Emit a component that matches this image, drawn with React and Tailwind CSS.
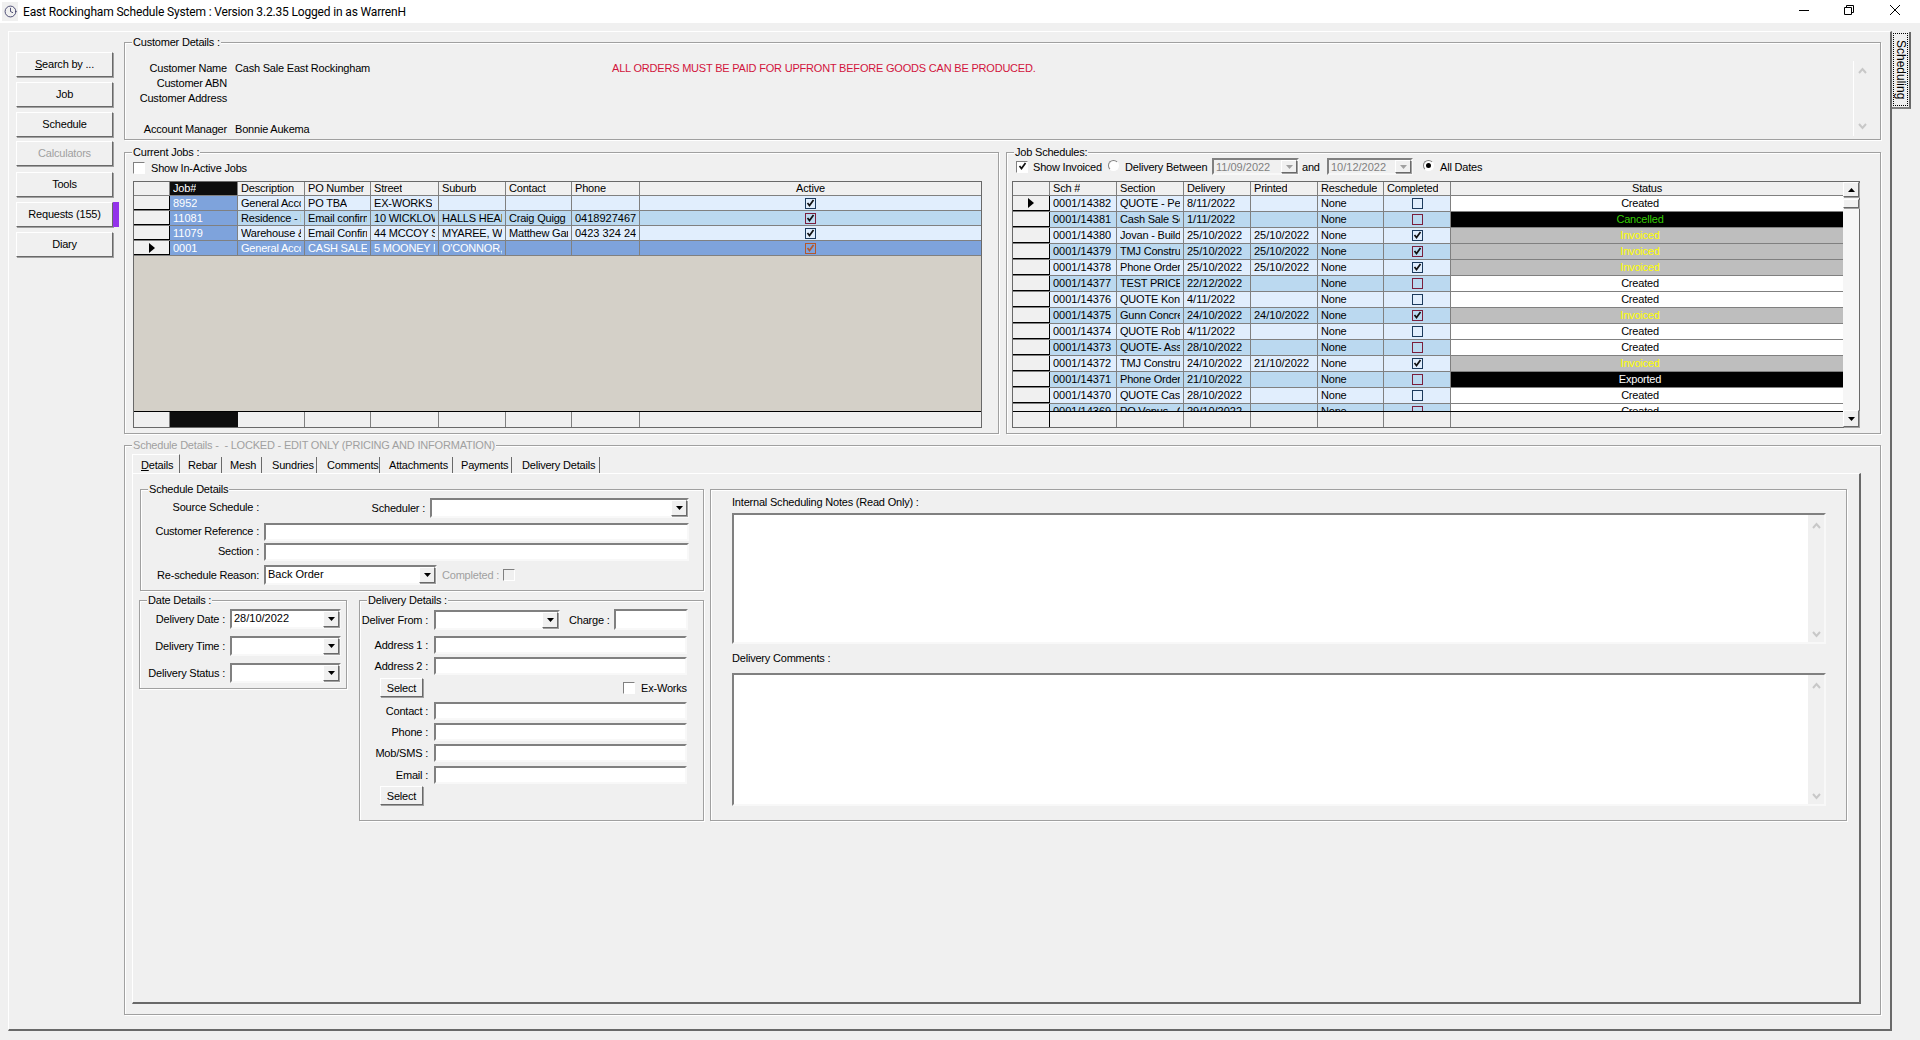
import { Clock } from "lucide-react";

const sunken = "border-2 border-t-[#808080] border-l-[#808080] border-r-[#f8f8f8] border-b-[#f8f8f8]";
const raised = "border border-t-white border-l-white border-r-[#696969] border-b-[#696969] shadow-[1px_1px_0_#a0a0a0]";
const jobCols = "grid-cols-[36px_68px_67px_66px_68px_67px_66px_68px_1fr]";
const schCols = "grid-cols-[37px_67px_67px_67px_67px_66px_67px_1fr]";

const jobs = [
  ["8952", "General Acco", "PO TBA", "EX-WORKS", "", "", ""],
  ["11081", "Residence - I", "Email confirm", "10 WICKLOW", "HALLS HEAD", "Craig Quigg", "0418927467"],
  ["11079", "Warehouse &", "Email Confirm", "44 MCCOY S", "MYAREE, W", "Matthew Gar", "0423 324 243"],
  ["0001", "General Acco", "CASH SALE", "5 MOONEY R", "O'CONNOR,", "", ""],
];

const schedules = [
  ["0001/14382", "QUOTE - Pet", "8/11/2022", "", false, "Created"],
  ["0001/14381", "Cash Sale Sc", "1/11/2022", "", false, "Cancelled"],
  ["0001/14380", "Jovan - Build", "25/10/2022", "25/10/2022", true, "Invoiced"],
  ["0001/14379", "TMJ Constru", "25/10/2022", "25/10/2022", true, "Invoiced"],
  ["0001/14378", "Phone Order", "25/10/2022", "25/10/2022", true, "Invoiced"],
  ["0001/14377", "TEST PRICE", "22/12/2022", "", false, "Created"],
  ["0001/14376", "QUOTE Koni", "4/11/2022", "", false, "Created"],
  ["0001/14375", "Gunn Concre", "24/10/2022", "24/10/2022", true, "Invoiced"],
  ["0001/14374", "QUOTE Rob", "4/11/2022", "", false, "Created"],
  ["0001/14373", "QUOTE- Ass", "28/10/2022", "", false, "Created"],
  ["0001/14372", "TMJ Constru", "24/10/2022", "21/10/2022", true, "Invoiced"],
  ["0001/14371", "Phone Order", "21/10/2022", "", false, "Exported"],
  ["0001/14370", "QUOTE Cast", "28/10/2022", "", false, "Created"],
  ["0001/14369", "PO Venus - O", "29/10/2022", "", false, "Created"],
];

const statusStyle = {
  Created: "bg-white text-black",
  Cancelled: "bg-black text-[#33cc00]",
  Invoiced: "bg-[#bebebe] text-[#ffff00]",
  Exported: "bg-black text-white",
};

const Group = ({ label, muted, className, children }) => (
  <div className={`relative border border-[#a0a0a0] shadow-[1px_1px_0_#fff,inset_1px_1px_0_#fff] ${className}`}>
    {label && (
      <span className={`absolute left-[7px] -top-[8px] bg-[#f0f0f0] px-[1px] leading-[14px] whitespace-pre ${muted ? "text-[#a0a0a0]" : ""}`}>
        {label}
      </span>
    )}
    {children}
  </div>
);

const Arrow = ({ muted }) => (
  <svg width="7" height="4" viewBox="0 0 7 4">
    <path d="M0 0h7L3.5 4z" fill={muted ? "#a0a0a0" : "#000"} />
  </svg>
);

const Combo = ({ value, className, disabled }) => (
  <div className={`${sunken} flex items-stretch ${disabled ? "bg-[#f0f0f0] text-[#808080]" : "bg-white"} ${className}`}>
    <span className="flex-1 pl-[2px] leading-[15px] whitespace-nowrap overflow-hidden tracking-normal">{value}</span>
    <span className={`${raised} w-[16px] bg-[#f0f0f0] flex items-center justify-center`}>
      <Arrow muted={disabled} />
    </span>
  </div>
);

const TextBox = ({ className }) => <input readOnly className={`${sunken} bg-white h-[18px] ${className}`} />;

const Tick = ({ color = "#111" }) => (
  <svg width="9" height="9" viewBox="0 0 9 9" className="block">
    <path d="M1.5 4 3.5 6.5 7.5 1" fill="none" stroke={color} strokeWidth="1.7" />
  </svg>
);

const Check = ({ on, tone = "border-[#1c3a5c]", tick }) => (
  <span className={`w-[11px] h-[11px] border ${tone} flex items-center justify-center`}>{on && <Tick color={tick} />}</span>
);

const CheckBox = ({ on, muted }) => (
  <span className={`w-[12px] h-[12px] shrink-0 border border-t-[#808080] border-l-[#808080] border-r-white border-b-white ${muted ? "bg-[#f0f0f0]" : "bg-white"} flex items-center justify-center`}>
    {on && <Tick />}
  </span>
);

const Radio = ({ on }) => (
  <span className="w-[11px] h-[11px] shrink-0 -mt-[2px] rounded-full border border-t-[#808080] border-l-[#808080] border-r-white border-b-white bg-white flex items-center justify-center">
    {on && <span className="w-[5px] h-[5px] rounded-full bg-black" />}
  </span>
);

const Marker = () => (
  <svg width="6" height="10" viewBox="0 0 6 10">
    <path d="M0 0l6 5-6 5z" fill="#000" />
  </svg>
);

const Chevron = ({ down }) => (
  <svg width="9" height="7" viewBox="0 0 9 7" className={down ? "rotate-180" : ""}>
    <path d="M1 6l3.5-4L8 6" fill="none" stroke="#c8c8c8" strokeWidth="2" />
  </svg>
);

const SideButton = ({ className = "", muted, children }) => (
  <button className={`${raised} w-[97px] h-[25px] pb-[2px] bg-[#f0f0f0] ${muted ? "text-[#a0a0a0]" : ""} ${className}`}>{children}</button>
);

const Cell = ({ className = "", digits, children }) => (
  <div className={`border-r border-[#808080] min-w-0 px-[3px] flex items-center ${digits ? "tracking-normal" : ""} ${className}`}>
    <div className="overflow-hidden whitespace-nowrap">{children}</div>
  </div>
);

const Indicator = ({ selected, body }) => (
  <div className={`bg-[#f0f0f0] flex items-center justify-center border-r ${body ? "border-black border-b" : "border-[#808080]"}`}>
    {selected && <Marker />}
  </div>
);

const JobsGrid = () => {
  const tones = ["bg-[#e1eefd]", "bg-[#bbd9f0]", "bg-[#e1eefd]", "bg-[#7ea3dc] text-white"];
  const boxes = ["border-[#1c3a5c]", "border-[#7a1f3d]", "border-[#1c3a5c]", "border-[#b5572c]"];
  return (
    <div className="w-[849px] h-[247px] border border-[#696969] flex flex-col">
      <div className={`grid ${jobCols} h-[14px] shrink-0 border-b border-[#808080] bg-[#f0f0f0] leading-[13px]`}>
        <div className="border-r border-[#808080]" />
        <Cell className="bg-[#0d0d0d] text-white">Job#</Cell>
        {["Description", "PO Number", "Street", "Suburb", "Contact", "Phone"].map((h) => (
          <Cell key={h}>{h}</Cell>
        ))}
        <div className="text-center">Active</div>
      </div>
      {jobs.map((row, i) => (
        <div key={row[0]} className={`grid ${jobCols} h-[15px] shrink-0 border-b border-[#808080] leading-[14px] ${tones[i]}`}>
          <Indicator selected={i === 3} body />
          <Cell digits className="bg-[#7ea3dc] text-white">{row[0]}</Cell>
          {row.slice(1).map((v, j) => (
            <Cell key={j} digits={j === 5}>{v}</Cell>
          ))}
          <div className="flex items-center justify-center">
            <Check on tone={boxes[i]} tick={i === 3 ? "#b5572c" : "#111"} />
          </div>
        </div>
      ))}
      <div className="flex-1 bg-[#d4d0c8]" />
      <div className={`grid ${jobCols} h-[16px] shrink-0 border-t border-black bg-[#f0f0f0]`}>
        <div className="border-r border-[#808080]" />
        <div className="bg-[#0d0d0d]" />
        {[0, 1, 2, 3, 4, 5].map((k) => (
          <div key={k} className="border-r border-[#808080]" />
        ))}
      </div>
    </div>
  );
};

const ScrollBar = () => (
  <div className="w-[16px] shrink-0 bg-[#f6f6f6] flex flex-col">
    <div className={`${raised} h-[15px] bg-[#f0f0f0] flex items-center justify-center`}>
      <span className="rotate-180 flex">
        <Arrow />
      </span>
    </div>
    <div className={`${raised} h-[9px] mt-[2px] bg-[#f0f0f0]`} />
    <div className={`${raised} h-[17px] mt-auto bg-[#f0f0f0] flex items-center justify-center`}>
      <Arrow />
    </div>
  </div>
);

const SchedulesGrid = () => (
  <div className="w-[848px] h-[247px] border border-[#696969] flex">
    <div className="flex-1 min-w-0 flex flex-col">
      <div className={`grid ${schCols} h-[14px] shrink-0 border-b border-[#808080] bg-[#f0f0f0] leading-[13px]`}>
        <div className="border-r border-[#808080]" />
        {["Sch #", "Section", "Delivery", "Printed", "Reschedule", "Completed"].map((h) => (
          <Cell key={h}>{h}</Cell>
        ))}
        <div className="text-center">Status</div>
      </div>
      <div className="h-[215px] shrink-0 overflow-hidden">
        {schedules.map((row, i) => {
          const alt = i % 2 === 1;
          return (
            <div key={row[0]} className={`grid ${schCols} h-[16px] border-b border-[#808080] leading-[15px] ${alt ? "bg-[#bbd9f0]" : "bg-[#e1eefd]"}`}>
              <Indicator selected={i === 0} body />
              <Cell digits>{row[0]}</Cell>
              <Cell>{row[1]}</Cell>
              <Cell digits>{row[2]}</Cell>
              <Cell digits>{row[3]}</Cell>
              <Cell>None</Cell>
              <div className="border-r border-[#808080] flex items-center justify-center">
                <Check on={row[4]} tone={alt ? "border-[#7a1f3d]" : "border-[#1c3a5c]"} />
              </div>
              <div className={`text-center pr-[14px] ${statusStyle[row[5]]}`}>{row[5]}</div>
            </div>
          );
        })}
      </div>
      <div className={`grid ${schCols} flex-1 border-t border-black bg-[#f0f0f0]`}>
        <div className="border-r border-black" />
        {[0, 1, 2, 3, 4, 5].map((k) => (
          <div key={k} className="border-r border-[#808080]" />
        ))}
      </div>
    </div>
    <ScrollBar />
  </div>
);

const tabs = [
  ["Rebar", "w-[42px] pl-[8px]"],
  ["Mesh", "w-[40px] pl-[8px]"],
  ["Sundries", "w-[55px] pl-[10px]"],
  ["Comments", "w-[63px] pl-[10px]"],
  ["Attachments", "w-[73px] pl-[9px]"],
  ["Payments", "w-[59px] pl-[8px]"],
  ["Delivery Details", "w-[88px] pl-[10px]"],
];

const Notes = ({ className }) => (
  <div className={`${sunken} w-[1094px] flex ${className}`}>
    <div className="flex-1 bg-white" />
    <div className="w-[16px] bg-[#f0f0f0] flex flex-col items-center justify-between pt-[7px] pb-[4px]">
      <Chevron />
      <Chevron down />
    </div>
  </div>
);

const Label = ({ className = "", children }) => (
  <span className={`text-right whitespace-nowrap ${className}`}>{children}</span>
);

const DeliveryRow = ({ label, className }) => (
  <div className={`flex items-center ${className}`}>
    <Label className="w-[68px]">{label}</Label>
    <TextBox className="w-[253px] ml-[6px]" />
  </div>
);

const SelectButton = ({ className = "" }) => (
  <button className={`${raised} w-[43px] h-[19px] bg-[#f0f0f0] ml-[20px] ${className}`}>Select</button>
);

const DetailsTab = () => (
  <div className="w-[1729px] h-[531px] border-t border-l border-t-white border-l-white border-r-2 border-b-2 border-r-[#696969] border-b-[#696969] flex items-start pl-[7px] pt-[15px]">
    <div className="w-[564px] shrink-0">
      <Group label="Schedule Details" className="h-[102px]">
        <div className="flex items-center mt-[8px] h-[20px]">
          <Label className="w-[118px] pb-[2px]">Source Schedule :</Label>
          <span className="w-[166px] text-right">Scheduler :</span>
          <Combo className="w-[259px] h-[20px] ml-[5px]" />
        </div>
        <div className="flex items-center mt-[5px]">
          <Label className="w-[118px] pb-[3px]">Customer Reference :</Label>
          <TextBox className="w-[425px] ml-[5px]" />
        </div>
        <div className="flex items-center mt-[2px]">
          <Label className="w-[118px] pb-[3px]">Section :</Label>
          <TextBox className="w-[425px] ml-[5px]" />
        </div>
        <div className="flex items-center mt-[4px]">
          <Label className="w-[118px]">Re-schedule Reason:</Label>
          <Combo value="Back Order" className="w-[173px] h-[20px] ml-[5px]" />
          <span className="text-[#a0a0a0] ml-[5px] w-[56px] whitespace-nowrap">Completed :</span>
          <span className="ml-[5px]">
            <CheckBox muted />
          </span>
        </div>
      </Group>
      <div className="flex items-start mt-[9px]">
        <Group label="Date Details :" className="w-[208px] h-[89px] -ml-[1px]">
          <div className="flex items-center mt-[8px]">
            <Label className="w-[85px]">Delivery Date :</Label>
            <Combo value="28/10/2022" className="w-[111px] h-[20px] ml-[5px]" />
          </div>
          <div className="flex items-center mt-[7px]">
            <Label className="w-[85px]">Delivery Time :</Label>
            <Combo className="w-[111px] h-[20px] ml-[5px]" />
          </div>
          <div className="flex items-center mt-[7px]">
            <Label className="w-[85px]">Delivery Status :</Label>
            <Combo className="w-[111px] h-[20px] ml-[5px]" />
          </div>
        </Group>
        <Group label="Delivery Details :" className="w-[345px] h-[221px] ml-[12px]">
          <div className="flex items-center mt-[8px]">
            <Label className="w-[68px]">Deliver From :</Label>
            <Combo className="w-[126px] h-[20px] ml-[6px]" />
            <Label className="ml-[9px] w-[39px] !text-left">Charge :</Label>
            <TextBox className="w-[74px] !h-[21px] ml-[6px]" />
          </div>
          <DeliveryRow label="Address 1 :" className="mt-[6px]" />
          <DeliveryRow label="Address 2 :" className="mt-[3px]" />
          <div className="flex items-center mt-[3px]">
            <SelectButton />
            <span className="ml-[200px]">
              <CheckBox />
            </span>
            <span className="ml-[6px] whitespace-nowrap">Ex-Works</span>
          </div>
          <DeliveryRow label="Contact :" className="mt-[5px]" />
          <DeliveryRow label="Phone :" className="mt-[3px]" />
          <DeliveryRow label="Mob/SMS :" className="mt-[3px]" />
          <DeliveryRow label="Email :" className="mt-[4px]" />
          <SelectButton className="mt-[2px] block" />
        </Group>
      </div>
    </div>
    <Group className="w-[1137px] h-[332px] ml-[6px] shrink-0 pl-[21px]">
      <div className="mt-[5px] leading-[14px]">Internal Scheduling Notes (Read Only) :</div>
      <Notes className="h-[131px] mt-[4px]" />
      <div className="mt-[7px] leading-[14px]">Delivery Comments :</div>
      <Notes className="h-[133px] mt-[8px]" />
    </Group>
  </div>
);

const App = () => (
  <div className="w-[1920px] h-[1040px] overflow-hidden bg-[#f0f0f0] text-black text-[11px] leading-[14px] tracking-[-0.2px] font-['Liberation_Sans',Arial,sans-serif]">
    <header className="h-[23px] bg-white flex items-center">
      <span className="w-[16px] h-[19px] ml-[2px] bg-[#f0f0f0] flex items-center justify-center text-[#2b2b5a]">
        <Clock size={13} strokeWidth={1.5} />
      </span>
      <span className="ml-[5px] text-[12px] tracking-[-0.16px] font-['Roboto',sans-serif]">East Rockingham Schedule System : Version 3.2.35 Logged in as WarrenH</span>
      <svg width="10" height="10" viewBox="0 0 10 10" className="ml-auto -mt-[3px]">
        <path d="M0 5.5h10" stroke="#000" />
      </svg>
      <svg width="10" height="10" viewBox="0 0 10 10" className="ml-[35px] -mt-[3px]">
        <path d="M.5 2.5h7v7h-7zM2.5 2.5v-2h7v7h-2" fill="none" stroke="#000" />
      </svg>
      <svg width="10" height="10" viewBox="0 0 10 10" className="ml-[36px] mr-[20px] -mt-[3px]">
        <path d="M0 0l10 10M10 0L0 10" stroke="#000" />
      </svg>
    </header>

    <div className="flex items-start pl-[8px] pt-[8px]">
      <div className="w-[1884px] h-[1000px] shrink-0 border-t border-l border-t-white border-l-white border-r-2 border-b-2 border-r-[#696969] border-b-[#696969] flex">
        <nav className="w-[115px] shrink-0 pl-[7px] pt-[20px] flex flex-col items-start gap-[5px]">
          <SideButton>
            <span className="underline">S</span>earch by ...
          </SideButton>
          <SideButton>Job</SideButton>
          <SideButton>Schedule</SideButton>
          <SideButton muted className="-mt-[1px]">Calculators</SideButton>
          <SideButton className="mt-[1px]">Tools</SideButton>
          <div className="flex">
            <SideButton>Requests (155)</SideButton>
            <span className="w-[6px] bg-[#9333ea]" />
          </div>
          <SideButton>Diary</SideButton>
        </nav>

        <main className="w-[1757px] shrink-0 pt-[10px]">
          <Group label="Customer Details :" className="h-[98px] flex">
            <div className="flex-1 pt-[18px] leading-[15px]">
              <div className="flex">
                <span className="w-[102px] text-right">Customer Name</span>
                <span className="w-[385px] pl-[8px]">Cash Sale East Rockingham</span>
                <span className="text-[#d2143c]">ALL ORDERS MUST BE PAID FOR UPFRONT BEFORE GOODS CAN BE PRODUCED.</span>
              </div>
              <div className="w-[102px] text-right">Customer ABN</div>
              <div className="w-[102px] text-right">Customer Address</div>
              <div className="flex mt-[16px]">
                <span className="w-[102px] text-right">Account Manager</span>
                <span className="pl-[8px]">Bonnie Aukema</span>
              </div>
            </div>
            <div className="w-[27px] h-[75px] mt-[18px] border-l border-white pl-[4px] py-[6px] flex flex-col justify-between">
              <Chevron />
              <Chevron down />
            </div>
          </Group>

          <div className="flex gap-[7px] mt-[12px]">
            <Group label="Current Jobs :" className="w-[875px] h-[282px] pl-[8px]">
              <div className="flex items-center h-[17px] mt-[6px]">
                <CheckBox />
                <span className="ml-[6px]">Show In-Active Jobs</span>
              </div>
              <div className="mt-[5px]">
                <JobsGrid />
              </div>
            </Group>

            <Group label="Job Schedules:" className="w-[875px] h-[282px]">
              <div className="flex items-center h-[17px] mt-[5px] pl-[9px] whitespace-nowrap">
                <CheckBox on />
                <span className="ml-[5px] w-[75px]">Show Invoiced</span>
                <Radio />
                <span className="ml-[6px] w-[87px]">Delivery Between</span>
                <Combo value="11/09/2022" disabled className="w-[87px] h-[17px]" />
                <span className="ml-[3px] w-[25px]">and</span>
                <Combo value="10/12/2022" disabled className="w-[86px] h-[17px]" />
                <span className="ml-[10px] flex">
                  <Radio on />
                </span>
                <span className="ml-[6px]">All Dates</span>
              </div>
              <div className="mt-[6px] pl-[5px]">
                <SchedulesGrid />
              </div>
            </Group>
          </div>

          <Group label="Schedule Details -  - LOCKED - EDIT ONLY (PRICING AND INFORMATION)" muted className="h-[570px] mt-[11px] pl-[7px] pt-[8px]">
            <div className="flex items-end h-[19px]">
              <div className="w-[48px] h-[19px] border-t border-l border-white border-r border-r-[#696969] pl-[8px] pt-[3px] leading-[15px]">
                <span className="underline">D</span>etails
              </div>
              {tabs.map(([name, size]) => (
                <div key={name} className={`${size} h-[16px] border-r border-r-[#696969] leading-[17px] whitespace-nowrap`}>
                  {name}
                </div>
              ))}
            </div>
            <DetailsTab />
          </Group>
        </main>
      </div>

      <div className="w-[19px] h-[77px] mt-[1px] shrink-0 bg-[#f0f0f0] border-r-2 border-b-2 border-r-[#696969] border-b-[#808080] p-[1px]">
        <div className="h-full border border-dotted border-black flex items-center justify-center">
          <span className="text-[12px] leading-none tracking-normal [writing-mode:vertical-rl]">Scheduling</span>
        </div>
      </div>
    </div>
  </div>
);

export default App;
